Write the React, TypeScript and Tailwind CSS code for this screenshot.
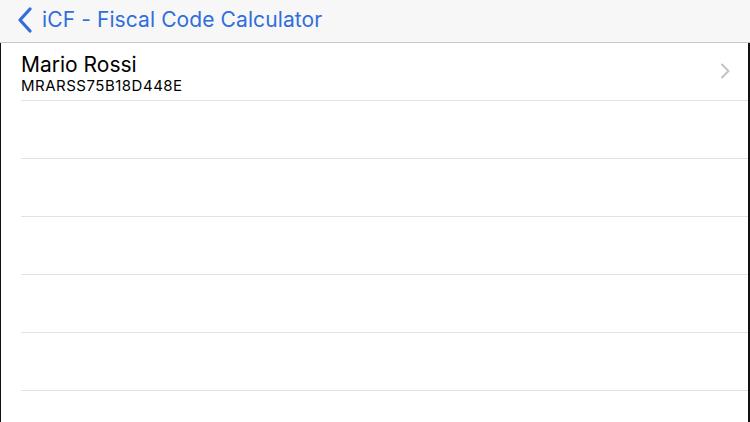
import React from 'react';

const font = { fontFamily: 'Inter, "Liberation Sans", sans-serif' };

const App: React.FC = () => {
  const emptyRows = [0, 1, 2, 3, 4];
  return (
    <div className="w-[750px] h-[422px] overflow-hidden bg-white flex flex-col" style={font}>
      <div className="h-[43px] shrink-0 bg-[#f7f7f7] border-b border-[#c9c9cc] flex items-center">
        <svg width="16" height="26" viewBox="0 0 16 26" className="ml-[17px] mt-[-2px]">
          <path d="M13 2 L3 13 L13 24" fill="none" stroke="#2f6edb" strokeWidth="3.2" strokeLinecap="round" strokeLinejoin="round" />
        </svg>
        <span className="ml-[9px] text-[21px] text-[#2f6edb] tracking-[0.1px] mt-[-2px]">iCF - Fiscal Code Calculator</span>
      </div>
      <div className="flex-1 border-l border-r-2 border-[#111]">
        <div className="h-[58px] pl-[20px] flex">
          <div className="flex-1 flex items-center border-b border-[#e2e2e4] pr-[18px]">
            <div className="flex-1 flex flex-col pt-[4px]">
              <span className="text-[21px] leading-[24px] text-black">Mario Rossi</span>
              <span className="text-[15px] leading-[18px] text-black tracking-[0.5px]">MRARSS75B18D448E</span>
            </div>
            <svg width="10" height="16" viewBox="0 0 10 16" className="mt-[-2px]">
              <path d="M2 1.5 L8.5 8 L2 14.5" fill="none" stroke="#c4c4c7" strokeWidth="2" strokeLinecap="round" strokeLinejoin="round" />
            </svg>
          </div>
        </div>
        {emptyRows.map((i) => (
          <div key={i} className="h-[58px] pl-[20px]">
            <div className="h-full border-b border-[#e2e2e4]" />
          </div>
        ))}
      </div>
    </div>
  );
};

export default App;
